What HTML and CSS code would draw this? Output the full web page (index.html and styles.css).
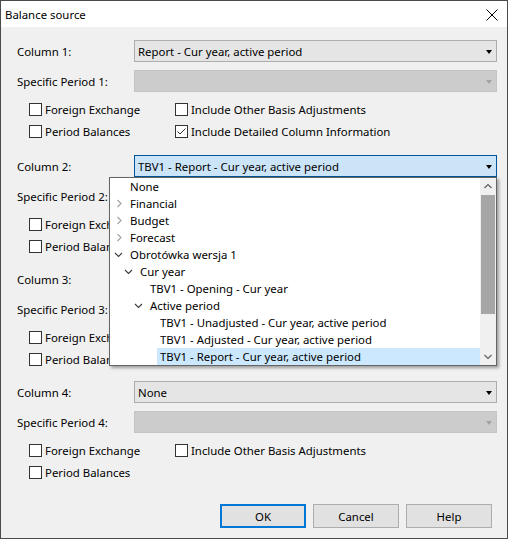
FILE: index.html
```html
<!DOCTYPE html>
<html>
<head>
<meta charset="utf-8">
<title>Balance source</title>
<link rel="stylesheet" href="styles.css">
</head>
<body>
<div class="window">
  <div class="titlebar">
    <span class="title">Balance source</span>
    <svg class="close" width="12" height="12" viewBox="0 0 12 12"><path d="M0.5 0.5 L11.5 11.5 M11.5 0.5 L0.5 11.5" stroke="#000" stroke-width="1" fill="none"/></svg>
  </div>
  <div class="content">
    <div class="group">
      <div class="row"><span class="label">Column 1:</span><div class="combo"><span class="value">Report - Cur year, active period</span><span class="arrow"></span></div></div>
      <div class="row"><span class="label">Specific Period 1:</span><div class="combo disabled"><span class="value"></span><span class="arrow"></span></div></div>
      <div class="checks">
        <div class="check"><span class="box"></span>Foreign Exchange</div>
        <div class="check"><span class="box"></span>Include Other Basis Adjustments</div>
        <div class="check"><span class="box"></span>Period Balances</div>
        <div class="check"><span class="box"><svg width="11" height="11" viewBox="0 0 11 11"><path d="M1.5 5.5 L4 8 L9.5 2.5" stroke="#333" stroke-width="1" fill="none"/></svg></span>Include Detailed Column Information</div>
      </div>
    </div>
    <div class="group g2">
      <div class="row"><span class="label">Column 2:</span>
        <div class="combo open"><span class="value">TBV1 - Report - Cur year, active period</span><span class="arrow"></span>
          <div class="popup">
            <div class="list">
              <div class="item l0"><span class="txt">None</span></div>
              <div class="item l0"><svg class="chev" width="9" height="9" viewBox="0 0 9 9"><path d="M3.5 1 L7 4.5 L3.5 8" stroke="#a2a2a2" stroke-width="1.1" fill="none"/></svg><span class="txt">Financial</span></div>
              <div class="item l0"><svg class="chev" width="9" height="9" viewBox="0 0 9 9"><path d="M3.5 1 L7 4.5 L3.5 8" stroke="#a2a2a2" stroke-width="1.1" fill="none"/></svg><span class="txt">Budget</span></div>
              <div class="item l0"><svg class="chev" width="9" height="9" viewBox="0 0 9 9"><path d="M3.5 1 L7 4.5 L3.5 8" stroke="#a2a2a2" stroke-width="1.1" fill="none"/></svg><span class="txt">Forecast</span></div>
              <div class="item l0"><svg class="chev" width="9" height="9" viewBox="0 0 9 9"><path d="M1 3 L4.5 6.5 L8 3" stroke="#3a3a3a" stroke-width="1.1" fill="none"/></svg><span class="txt">Obrotówka wersja 1</span></div>
              <div class="item l1"><svg class="chev" width="9" height="9" viewBox="0 0 9 9"><path d="M1 3 L4.5 6.5 L8 3" stroke="#3a3a3a" stroke-width="1.1" fill="none"/></svg><span class="txt">Cur year</span></div>
              <div class="item l2"><span class="txt">TBV1 - Opening - Cur year</span></div>
              <div class="item l2"><svg class="chev" width="9" height="9" viewBox="0 0 9 9"><path d="M1 3 L4.5 6.5 L8 3" stroke="#3a3a3a" stroke-width="1.1" fill="none"/></svg><span class="txt">Active period</span></div>
              <div class="item l3"><span class="txt">TBV1 - Unadjusted - Cur year, active period</span></div>
              <div class="item l3"><span class="txt">TBV1 - Adjusted - Cur year, active period</span></div>
              <div class="item l3 sel"><span class="txt">TBV1 - Report - Cur year, active period</span></div>
            </div>
            <div class="scrollbar">
              <svg class="sarrow" width="16" height="17" viewBox="0 0 16 17"><path d="M4.5 10 L8 6.5 L11.5 10" stroke="#606060" stroke-width="1.2" fill="none"/></svg>
              <div class="track"><div class="thumb"></div></div>
              <svg class="sarrow" width="16" height="17" viewBox="0 0 16 17"><path d="M4.5 7 L8 10.5 L11.5 7" stroke="#606060" stroke-width="1.2" fill="none"/></svg>
            </div>
          </div>
        </div>
      </div>
      <div class="row"><span class="label">Specific Period 2:</span><div class="combo disabled"><span class="value"></span><span class="arrow"></span></div></div>
      <div class="checks">
        <div class="check"><span class="box"></span>Foreign Exchange</div>
        <div class="check"><span class="box"></span>Include Other Basis Adjustments</div>
        <div class="check"><span class="box"></span>Period Balances</div>
        <div class="check"><span class="box"></span>Include Detailed Column Information</div>
      </div>
    </div>
    <div class="group">
      <div class="row"><span class="label">Column 3:</span><div class="combo"><span class="value">None</span><span class="arrow"></span></div></div>
      <div class="row"><span class="label">Specific Period 3:</span><div class="combo disabled"><span class="value"></span><span class="arrow"></span></div></div>
      <div class="checks">
        <div class="check"><span class="box"></span>Foreign Exchange</div>
        <div class="check"><span class="box"></span>Include Other Basis Adjustments</div>
        <div class="check"><span class="box"></span>Period Balances</div>
        <div class="check"><span class="box"></span>Include Detailed Column Information</div>
      </div>
    </div>
    <div class="group">
      <div class="row"><span class="label">Column 4:</span><div class="combo"><span class="value">None</span><span class="arrow"></span></div></div>
      <div class="row"><span class="label">Specific Period 4:</span><div class="combo disabled"><span class="value"></span><span class="arrow"></span></div></div>
      <div class="checks">
        <div class="check"><span class="box"></span>Foreign Exchange</div>
        <div class="check"><span class="box"></span>Include Other Basis Adjustments</div>
        <div class="check"><span class="box"></span>Period Balances</div>
      </div>
    </div>
  </div>
  <div class="buttons">
    <div class="btn default">OK</div>
    <div class="btn">Cancel</div>
    <div class="btn">Help</div>
  </div>
</div>
</body>
</html>
```
FILE: styles.css
```css
* { box-sizing: border-box; }
html, body { margin: 0; padding: 0; }
body {
  font-family: "Noto Sans", "Open Sans", sans-serif;
  font-size: 11.4px;
  color: #000;
  background: #fff;
}
.window {
  width: 508px;
  height: 539px;
  border: 1px solid #4a4a4a;
  background: #f0f0f0;
  display: flex;
  flex-direction: column;
}
.titlebar {
  height: 26px;
  background: #fff;
  display: flex;
  align-items: center;
  justify-content: space-between;
  padding: 0 9px 0 4px;
  flex: none;
}
.title { font-size: 11.4px; }
.close { display: block; margin-top: 1px; }
.content {
  padding: 13px 10px 0 16px;
  display: flex;
  flex-direction: column;
}
.group { display: flex; flex-direction: column; margin-bottom: 11px; }
.group.g2 { margin-top: 2px; }
.row { display: flex; align-items: center; height: 22px; }
.row + .row { margin-top: 8px; }
.label { width: 117px; flex: none; padding-top: 1px; }
.combo {
  flex: 1;
  height: 22px;
  border: 1px solid #adadad;
  background: #e5e5e5;
  display: flex;
  align-items: center;
  padding: 0 4px 0 3px;
  position: relative;
}
.combo .value { flex: 1; white-space: nowrap; }
.combo .arrow {
  width: 0; height: 0;
  border-left: 3.5px solid transparent;
  border-right: 3.5px solid transparent;
  border-top: 4px solid #000;
  margin-top: 1px;
}
.combo.disabled { background: #cccccc; border-color: #c4c4c4; }
.combo.disabled .arrow { border-top-color: #a3a3a3; }
.combo.open { background: #cce4f7; border-color: #005499; z-index: 5; }
.checks {
  display: grid;
  grid-template-columns: 146px 1fr;
  margin-top: 6px;
  padding-left: 12px;
}
.check { display: flex; align-items: center; height: 22px; white-space: nowrap; }
.box {
  width: 13px; height: 13px;
  border: 1px solid #333;
  background: #fff;
  margin-right: 3px;
  flex: none;
  display: flex;
}
.box svg { display: block; }
.popup {
  position: absolute;
  left: -26px;
  top: 21px;
  width: 388px;
  height: 189px;
  border: 1px solid #646464;
  background: #fff;
  box-shadow: 2px 2px 3px rgba(0,0,0,0.35);
  display: flex;
}
.list { flex: 1; display: flex; flex-direction: column; }
.item {
  height: 17px;
  display: flex;
  align-items: center;
  position: relative;
  padding-left: 3px;
  white-space: nowrap;
}
.item.l0 { margin-left: 17px; }
.item.l1 { margin-left: 27px; }
.item.l2 { margin-left: 37px; }
.item.l3 { margin-left: 47px; }
.item.sel { background: #cce8ff; }
.chev { position: absolute; left: -13px; top: 4px; }
.scrollbar {
  width: 16px;
  background: #f0f0f0;
  display: flex;
  flex-direction: column;
  flex: none;
}
.sarrow { display: block; flex: none; }
.track { flex: 1; display: flex; flex-direction: column; }
.thumb { height: 119px; margin: 0 1px; background: #a6a6a6; }
.buttons {
  margin-top: auto;
  display: flex;
  justify-content: flex-end;
  gap: 7px;
  padding: 0 15px 10px 0;
}
.btn {
  width: 86px;
  height: 24px;
  border: 1px solid #adadad;
  background: #e1e1e1;
  display: flex;
  align-items: center;
  justify-content: center;
}
.btn.default { border: 2px solid #0078d7; }
```
